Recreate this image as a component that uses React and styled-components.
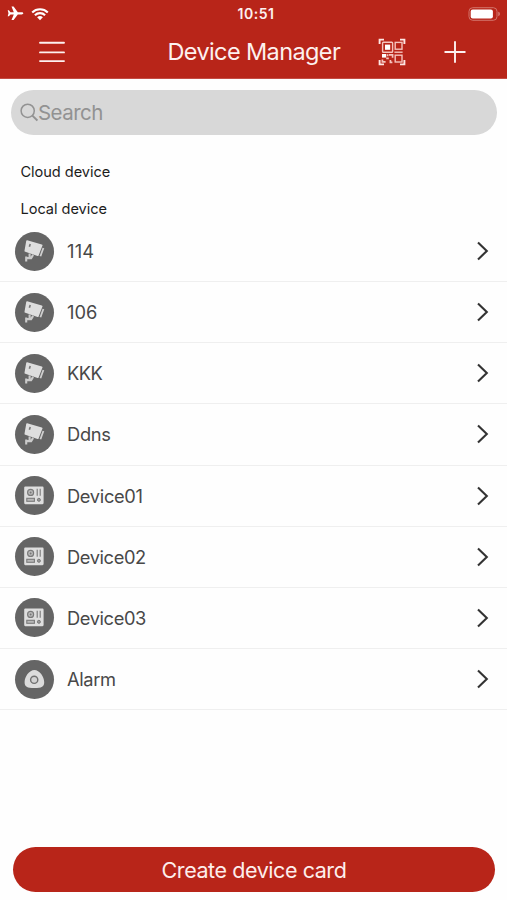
import React from 'react';
import styled, { createGlobalStyle } from 'styled-components';

const GlobalStyle = createGlobalStyle`
  * { box-sizing: border-box; }
  body {
    margin: 0;
    background: #fefefe;
    font-family: Inter, "Liberation Sans", sans-serif;
  }
  button { font: inherit; border: 0; padding: 0; background: none; cursor: pointer; }
  svg { display: block; flex: none; }
`;

const Screen = styled.main`
  display: flex;
  flex-direction: column;
  height: 900px;
  overflow: hidden;
`;

const Header = styled.header`
  height: 79px;
  flex: none;
  background: #b82519;
  color: #fdf1ef;
  border-bottom: 1px solid #c44c43;
`;

const StatusBar = styled.div`
  display: grid;
  grid-template-columns: 1fr auto 1fr;
  align-items: center;
  height: 27px;
  padding: 0 6px 0 7px;
`;

const StatusIcons = styled.div`
  display: flex;
  align-items: center;
  gap: 7px;
`;

const BatterySlot = styled.div`
  justify-self: end;
`;

const Clock = styled.time`
  font-size: 14px;
  font-weight: 600;
  letter-spacing: 0.5px;
  line-height: 27px;
  padding-left: 4px;
`;

const NavBar = styled.nav`
  display: grid;
  grid-template-columns: 104px 1fr 54px 72px 16px;
  align-items: center;
  height: 50px;
`;

const NavButton = styled.button`
  display: flex;
  justify-content: center;
  color: inherit;
`;

const Title = styled.h1`
  margin: 0;
  padding-left: 63.5px;
  font-size: 23.5px;
  font-weight: 400;
  line-height: 50px;
  letter-spacing: -0.62px;
  white-space: nowrap;
`;

const SearchField = styled.label`
  display: flex;
  align-items: center;
  flex: none;
  height: 45px;
  margin: 11px 10px 0 11px;
  padding-left: 9px;
  border-radius: 23px;
  background: #d8d8d8;
  color: #929292;
  font-size: 20.5px;
  letter-spacing: -0.55px;
`;

const SectionTitle = styled.h2`
  margin: ${(p) => p.$top}px 0 0 20.5px;
  flex: none;
  height: 20px;
  color: #1c1c1c;
  font-size: 14.6px;
  font-weight: 400;
  letter-spacing: -0.05px;
  line-height: 20px;
`;

const DeviceList = styled.ul`
  list-style: none;
  margin: 2px 0 0;
  padding: 0;
`;

const DeviceRow = styled.li`
  display: flex;
  align-items: center;
  height: 61.15px;
  padding: 0 16px 0 14px;
  border-bottom: 1.5px solid #efefef;
`;

const Avatar = styled.span`
  display: flex;
  align-items: center;
  justify-content: center;
  width: 39px;
  height: 39px;
  margin: 0 0.5px;
  border-radius: 50%;
  background: #656565;
`;

const DeviceName = styled.span`
  flex: 1;
  margin-left: 13px;
  color: #484848;
  font-size: 18.3px;
  letter-spacing: ${(p) => p.$tracking}px;
`;

const CreateButton = styled.button`
  && {
    height: 45px;
    flex: none;
    margin: auto 12px 8px 13px;
    border-radius: 23px;
    background: #b82519;
    color: #fdeeec;
    font-size: 21.5px;
    font-weight: 400;
    letter-spacing: -0.43px;
  }
`;

const AirplaneIcon = () => (
  <svg width="17" height="15" viewBox="0 0 17 15" fill="#fff">
    <path d="M16.3 7.3c0-.7-.7-1.1-1.6-1.1h-3.9L6.6.6H4.5L6.8 6.2H3.5L1.9 4.3H.7l.8 3-.8 3h1.2l1.6-1.9h3.3L4.5 14h2.1l4.2-5.6h3.9c.9 0 1.6-.4 1.6-1.1z" />
  </svg>
);

const WifiIcon = () => (
  <svg width="18" height="14" viewBox="0 0 18 14" fill="none" stroke="#fff" strokeWidth="2.1">
    <path d="M1.2 5.4a11.2 11.2 0 0 1 15.6 0M3.9 8.2a7.3 7.3 0 0 1 10.2 0" />
    <path d="M9 13.2 6.1 10.3a4.2 4.2 0 0 1 5.8 0z" fill="#fff" stroke="none" />
  </svg>
);

const BatteryIcon = () => (
  <svg width="33" height="14" viewBox="0 0 33 14">
    <rect x="1" y="0.7" width="28" height="12.6" rx="3.7" fill="none" stroke="#d2746b" strokeWidth="1" />
    <rect x="2.7" y="2.4" width="22.2" height="9.2" rx="2" fill="#fff" />
    <path d="M30.4 4.8c1.8.5 1.8 3.9 0 4.4z" fill="#db8b84" />
  </svg>
);

const MenuIcon = () => (
  <svg width="26" height="22" viewBox="0 0 26 22" stroke="currentColor" strokeWidth="1.9" strokeLinecap="round">
    <path d="M1 1.7h24M1 11.4h24M1 20.1h24" />
  </svg>
);

const QrIcon = () => (
  <svg width="28" height="28" viewBox="0 0 28 28" fill="none" stroke="#f5c3bd" strokeWidth="1.4">
    <path d="M1.6 6V1.6H6M22 1.6h4.4V6M26.4 22v4.4H22M6 26.4H1.6V22" stroke="#fde6e3" strokeWidth="1.9" />
    <rect x="4.6" y="4.2" width="10" height="10" rx=".8" />
    <rect x="7" y="6.6" width="5.2" height="5.2" fill="#fff" stroke="none" />
    <rect x="17.2" y="4.4" width="6.8" height="6.8" />
    <rect x="17.2" y="17.2" width="6.8" height="6.8" />
    <path d="M16.4 14.2h8.2" />
    <path d="M4 16h4.2v3.6H4z" fill="#fff" stroke="none" />
    <path d="M9.6 16.2v2M8.2 20.4h2.6M11 16.8h3.6v3M4.4 21.6v2.2h3.2M12.4 22v2.4h2" strokeWidth="1.7" />
  </svg>
);

const PlusIcon = () => (
  <svg width="22" height="22" viewBox="0 0 22 22" stroke="currentColor" strokeWidth="1.9">
    <path d="M.5 11h21M11 .2v21.6" />
  </svg>
);

const SearchIcon = () => (
  <svg width="18" height="19" viewBox="0 0 18 19" fill="none" stroke="currentColor" strokeWidth="1.5">
    <circle cx="7.7" cy="7.8" r="6.6" />
    <path d="m12.4 12.6 5 5" strokeWidth="2" />
  </svg>
);

const ChevronIcon = () => (
  <svg width="18" height="22" viewBox="0 0 18 22" fill="none" stroke="#333" strokeWidth="2.1">
    <path d="m5 2.6 8.8 8.4L5 19.4" />
  </svg>
);

const CameraIcon = () => (
  <svg width="40" height="40" viewBox="0 0 40 40">
    <path d="m13.2 9.2 14.6 4.2c.6.2.9.6.7 1.1l-3.9 9.900c-.2.5-.6.7-1.100.5l-12.200-4.100c-.6-.2-.9-.6-.8-1.100l1.700-9.800c.1-.6.5-.8 1-.7z" fill="#dedede" />
    <path d="m29.4 17-3 8.2" fill="none" stroke="#cfcfcf" strokeWidth="1.8" />
    <path d="m16.2 13-.8 2.8" stroke="#777" strokeWidth="1.6" />
    <path d="M12.2 30.5v-5M12.2 27.1h4.9l2-3.2M15.6 22.4v4" fill="none" stroke="#cbcbcb" strokeWidth="2.1" />
  </svg>
);

const RecorderIcon = () => (
  <svg width="40" height="40" viewBox="0 0 40 40" fill="none" stroke="#7a7a7a">
    <rect x="10.2" y="10.6" width="19.4" height="17.6" rx="1.1" fill="#dedede" stroke="none" />
    <circle cx="16.6" cy="16.4" r="3" fill="#bcbcbc" strokeWidth="1.2" />
    <circle cx="16.6" cy="16.4" r="1" fill="#777" stroke="none" />
    <path d="M23.2 12.8v7M26.2 12.8v7" strokeWidth="1.1" />
    <rect x="12.8" y="22.3" width="7.6" height="3" fill="#b9b9b9" strokeWidth="1.1" />
    <circle cx="24.9" cy="23.8" r="1.5" fill="#9a9a9a" strokeWidth="1" />
  </svg>
);

const AlarmIcon = () => (
  <svg width="40" height="40" viewBox="0 0 40 40">
    <path d="M20.4 11c5.2 0 9.8 6.8 9.8 12.2 0 4.6-2.4 5.8-9.8 5.8s-9.8-1.2-9.8-5.8C10.6 17.8 15.2 11 20.4 11z" fill="#dcdcdc" />
    <circle cx="20.2" cy="20.8" r="3.6" fill="#d2d2d2" stroke="#717171" strokeWidth="1.4" />
  </svg>
);

const deviceIcons = { camera: CameraIcon, recorder: RecorderIcon, alarm: AlarmIcon };

const devices = [
  { name: '114', type: 'camera', tracking: 0.2 },
  { name: '106', type: 'camera', tracking: 0.05 },
  { name: 'KKK', type: 'camera', tracking: -0.5 },
  { name: 'Ddns', type: 'camera', tracking: -0.3 },
  { name: 'Device01', type: 'recorder', tracking: -0.33 },
  { name: 'Device02', type: 'recorder', tracking: -0.4 },
  { name: 'Device03', type: 'recorder', tracking: -0.4 },
  { name: 'Alarm', type: 'alarm', tracking: -0.35 },
];

function Device({ name, type, tracking }) {
  const Icon = deviceIcons[type];
  return (
    <DeviceRow>
      <Avatar><Icon /></Avatar>
      <DeviceName $tracking={tracking}>{name}</DeviceName>
      <ChevronIcon />
    </DeviceRow>
  );
}

export default function App() {
  return (
    <Screen>
      <GlobalStyle />
      <Header>
        <StatusBar>
          <StatusIcons><AirplaneIcon /><WifiIcon /></StatusIcons>
          <Clock>10:51</Clock>
          <BatterySlot><BatteryIcon /></BatterySlot>
        </StatusBar>
        <NavBar>
          <NavButton aria-label="Menu"><MenuIcon /></NavButton>
          <Title>Device Manager</Title>
          <NavButton aria-label="Scan code"><QrIcon /></NavButton>
          <NavButton aria-label="Add device"><PlusIcon /></NavButton>
        </NavBar>
      </Header>
      <SearchField><SearchIcon />Search</SearchField>
      <SectionTitle $top={27}>Cloud device</SectionTitle>
      <SectionTitle $top={17}>Local device</SectionTitle>
      <DeviceList>
        {devices.map((d) => <Device key={d.name} {...d} />)}
      </DeviceList>
      <CreateButton>Create device card</CreateButton>
    </Screen>
  );
}
